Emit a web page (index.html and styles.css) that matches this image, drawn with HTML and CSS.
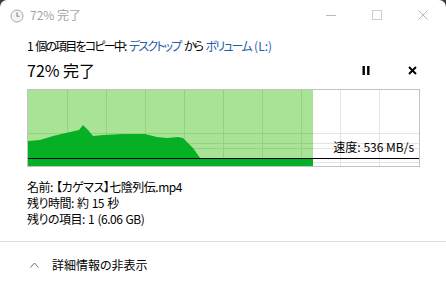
FILE: index.html
```html
<!DOCTYPE html>
<html lang="ja">
<head>
<meta charset="utf-8">
<title>72% 完了</title>
<link rel="stylesheet" href="styles.css">
</head>
<body>
<div class="window">
  <div class="titlebar">
    <svg class="clock" width="14" height="14" viewBox="0 0 14 14">
      <circle cx="7" cy="7" r="6" fill="#f4f4f4" stroke="#a8a8a8" stroke-width="1"/>
      <path d="M7 3.2 V7.2 H9.6" fill="none" stroke="#8a8a8a" stroke-width="1.1"/>
    </svg>
    <span class="title">72% 完了</span>
    <div class="controls">
      <span class="ctl"><svg width="10" height="10" viewBox="0 0 10 10"><path d="M0 5.5 H10" stroke="#b8b8b8" stroke-width="1"/></svg></span>
      <span class="ctl"><svg width="10" height="10" viewBox="0 0 10 10"><rect x="0.5" y="0.5" width="9" height="9" fill="none" stroke="#cfcfcf" stroke-width="1"/></svg></span>
      <span class="ctl"><svg width="10" height="10" viewBox="0 0 10 10"><path d="M0.5 0.5 L9.5 9.5 M9.5 0.5 L0.5 9.5" stroke="#b8b8b8" stroke-width="1"/></svg></span>
    </div>
  </div>
  <div class="content">
    <div class="status">1 個の項目をコピー中: <span class="link">デスクトップ</span> から <span class="link">ボリューム <span class="latin">(L:)</span></span></div>
    <div class="progress-row">
      <span class="percent">72% 完了</span>
      <span class="btn"><svg width="8" height="9" viewBox="0 0 8 9"><rect x="0.5" y="0" width="2.4" height="9" fill="#000"/><rect x="5.1" y="0" width="2.4" height="9" fill="#000"/></svg></span>
      <span class="btn"><svg width="9" height="9" viewBox="0 0 9 9"><path d="M1 1 L8 8 M8 1 L1 8" stroke="#000" stroke-width="1.9"/></svg></span>
    </div>
    <div class="graph">
      <svg class="chart" width="391" height="76" viewBox="0 0 391 76">
        <rect x="0" y="0" width="285" height="76" fill="#a9e496"/>
        <g stroke="#e4e4e4" stroke-width="1">
          <path d="M39.5 0 V76 M78.5 0 V76 M117.5 0 V76 M156.5 0 V76 M195.5 0 V76 M234.5 0 V76 M273.5 0 V76 M312.5 0 V76 M351.5 0 V76"/>
          <path d="M0 43.5 H391 M0 53.5 H391 M0 58.5 H391 M0 72.5 H391"/>
        </g>
        <g stroke="#95d181" stroke-width="1">
          <path d="M39.5 0 V76 M78.5 0 V76 M117.5 0 V76 M156.5 0 V76 M195.5 0 V76 M234.5 0 V76 M273.5 0 V76"/>
          <path d="M0 43.5 H285 M0 53.5 H285 M0 58.5 H285"/>
        </g>
        <polygon fill="#06b025" points="0,51 12,50 25,46 42,42 51,40 55,35 60,40 65,46 75,45 95,44 117,44 129,47 139,48 150,47 155,48 165,58 172,68 0,68"/>
        <rect x="0" y="68" width="285" height="8" fill="#06b025"/>
        <path d="M0 68.5 H391" stroke="#000" stroke-width="1"/>
      </svg>
      <span class="speed">速度: 536 MB/s</span>
    </div>
    <div class="details">
      <div>名前: 【カゲマス】七陰列伝.mp4</div>
      <div>残り時間: 約 15 秒</div>
      <div>残りの項目: 1 (6.06 GB)</div>
    </div>
  </div>
  <div class="footer">
    <svg class="chev" width="9" height="6" viewBox="0 0 9 6"><path d="M0.5 5.5 L4.5 1 L8.5 5.5" fill="none" stroke="#707070" stroke-width="1"/></svg>
    <span>詳細情報の非表示</span>
  </div>
</div>
</body>
</html>
```
FILE: styles.css
```css
html, body {
  margin: 0;
  padding: 0;
  background: #3a3a3a;
}
body {
  width: 446px;
  height: 281px;
  overflow: hidden;
  font-family: "Noto Sans CJK JP", "Noto Sans", sans-serif;
  font-feature-settings: "palt";
  color: #000;
}
.window {
  width: 446px;
  height: 281px;
  background: #fff;
  border-radius: 7px 7px 0 0;
  overflow: hidden;
}
.titlebar {
  height: 30px;
  display: flex;
  align-items: center;
}
.clock {
  margin-left: 10px;
  margin-top: 1px;
}
.title {
  margin-left: 6px;
  font-size: 12px;
  line-height: 16px;
  color: #a3a3a3;
}
.controls {
  margin-left: auto;
  display: flex;
  height: 30px;
}
.ctl {
  width: 46px;
  display: flex;
  align-items: center;
  justify-content: center;
}
.content {
  padding: 0 26px 0 27px;
}
.status {
  margin-top: 8px;
  font-size: 12px;
  line-height: 16px;
  letter-spacing: -1.8px;
  word-spacing: 2.4px;
  white-space: nowrap;
}
.latin {
  letter-spacing: 0;
}
.link {
  color: #1f5ea8;
}
.progress-row {
  margin-top: 6px;
  height: 20px;
  display: flex;
  align-items: center;
}
.percent {
  flex: 1;
  font-size: 16px;
  line-height: 20px;
}
.btn {
  width: 16px;
  height: 20px;
  display: flex;
  align-items: center;
  justify-content: center;
}
.btn + .btn {
  margin-left: 30px;
}
.graph {
  position: relative;
  margin-top: 9px;
  width: 391px;
  height: 76px;
  border: 1px solid #c2c2c2;
}
.chart {
  display: block;
}
.speed {
  position: absolute;
  right: 5px;
  top: 49px;
  font-size: 12px;
  line-height: 16px;
  color: #000;
}
.details {
  margin-top: 12px;
  font-size: 12px;
  line-height: 16px;
  letter-spacing: -0.5px;
  word-spacing: 1px;
}
.footer {
  margin-top: 14px;
  border-top: 1px solid #dcdcdc;
  padding: 15px 0 0 30px;
  display: flex;
  align-items: center;
  font-size: 12px;
  line-height: 16px;
}
.chev {
  margin-right: 13px;
}
```
